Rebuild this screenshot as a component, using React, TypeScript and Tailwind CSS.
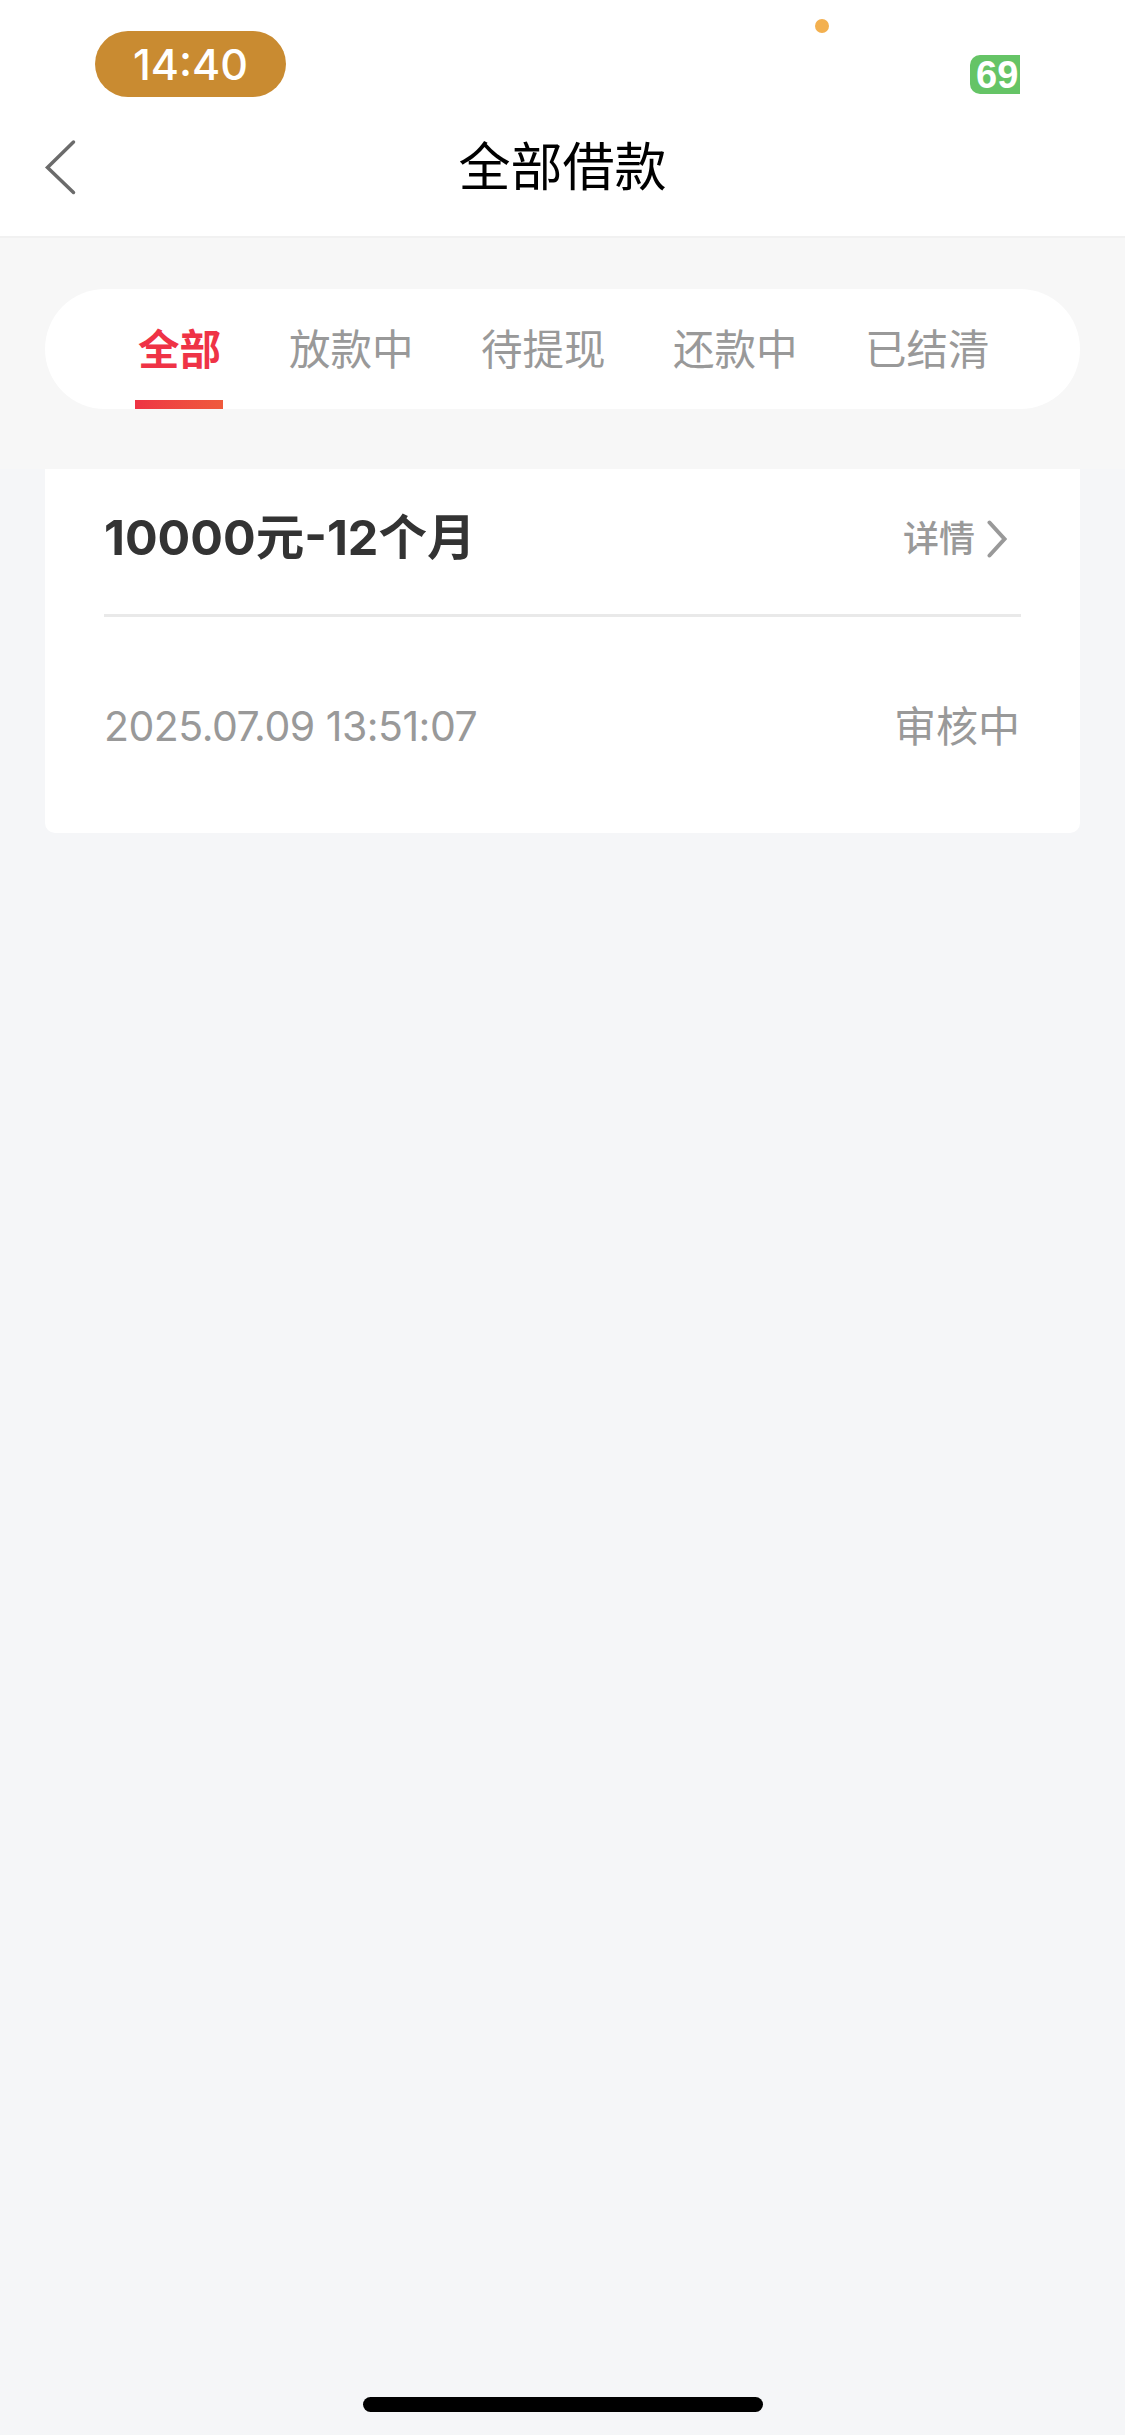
import React, { useState } from 'react';

interface Loan {
  id: string;
  title: string;
  time: string;
  status: string;
}

const TABS = ['全部', '放款中', '待提现', '还款中', '已结清'];

const LOANS: Loan[] = [
  { id: '1', title: '10000元-12个月', time: '2025.07.09 13:51:07', status: '审核中' },
];

const StatusBar: React.FC = () => (
  <div className="relative h-[110px] flex items-start justify-between pl-[95px] pr-[105px]">
    <div className="mt-[31px] w-[191px] h-[66px] rounded-full bg-[#c98b31] flex items-center justify-center text-white text-[43px] leading-none font-medium">
      14:40
    </div>
    <div className="absolute left-[815px] top-[19px] w-[14px] h-[14px] rounded-full bg-[#f3b04f]" />
    <div className="mt-[55px] w-[50px] h-[39px] pl-[6px] pt-[2px] rounded-l-[10px] bg-[#65c466] flex items-center text-white text-[38px] leading-[37px] font-bold font-['Liberation_Sans',sans-serif]">
      69
    </div>
  </div>
);

const Header: React.FC<{ title: string }> = ({ title }) => (
  <div className="h-[128px] grid grid-cols-3 items-start border-b-2 border-[#f1f1f1]">
    <button className="pl-[44px] pt-[29px]">
      <svg width="34" height="56" viewBox="0 0 34 56" fill="none" stroke="#6b6b6b" strokeWidth="3.5" strokeLinecap="round">
        <path d="M29.5 3L3.5 28.5L29.5 53.5" />
      </svg>
    </button>
    <h1 className="pt-[32px] text-center text-[52px] leading-[52px] text-black whitespace-nowrap">{title}</h1>
  </div>
);

const LoanCard: React.FC<{ loan: Loan }> = ({ loan }) => (
  <div className="mx-[45px] h-[364px] px-[59px] bg-white rounded-b-[10px]">
    <div className="h-[148px] pt-[3px] pb-[9px] flex items-center justify-between border-b-3 border-[#e9e9e9]">
      <span className="text-[48.5px] leading-none font-bold text-[#333333]">{loan.title}</span>
      <button className="flex items-center gap-[12px] pr-[14px] text-[36px] leading-none font-medium text-[#999999]">
        详情
        <svg width="20" height="38" viewBox="0 0 20 38" fill="none" stroke="#999999" strokeWidth="4" strokeLinecap="round">
          <path d="M2.5 2.5L17.5 19L2.5 35.5" />
        </svg>
      </button>
    </div>
    <div className="h-[216px] pt-[3px] flex items-center justify-between text-[#999999] leading-none">
      <span className="text-[41px] tracking-[-0.5px]">{loan.time}</span>
      <span className="text-[42px] pr-px">{loan.status}</span>
    </div>
  </div>
);

const App: React.FC = () => {
  const [activeTab, setActiveTab] = useState(0);

  return (
    <div className="w-[1125px] h-[2435px] flex flex-col overflow-hidden bg-[#f5f6f8] font-['Inter','Noto_Sans_CJK_SC',sans-serif]">
      <div className="bg-white">
        <StatusBar />
        <Header title="全部借款" />
      </div>

      {/* Tabs */}
      <div className="h-[231px] pt-[51px] px-[45px] bg-[#f7f7f7]">
        <div className="h-[120px] flex justify-center gap-[67.5px] rounded-full bg-white">
          {TABS.map((tab, index) => (
            <button
              key={tab}
              onClick={() => setActiveTab(index)}
              className={`flex flex-col items-center justify-between text-[41.5px] leading-none ${index === activeTab ? 'w-[88px] -mr-[2px] font-bold text-[#ef3346]' : 'text-[#999999]'}`}
            >
              <span className="pt-[41px]">{tab}</span>
              {index === activeTab && (
                <span className="w-full h-[9px] bg-gradient-to-r from-[#ee3344] to-[#ef5a3c]" />
              )}
            </button>
          ))}
        </div>
      </div>

      {/* Loan list */}
      <div className="flex-1">
        {LOANS.map(loan => (
          <LoanCard key={loan.id} loan={loan} />
        ))}
      </div>

      {/* Home indicator */}
      <div className="mx-auto mb-[23px] w-[400px] h-[15px] rounded-full bg-black" />
    </div>
  );
};

export default App;
